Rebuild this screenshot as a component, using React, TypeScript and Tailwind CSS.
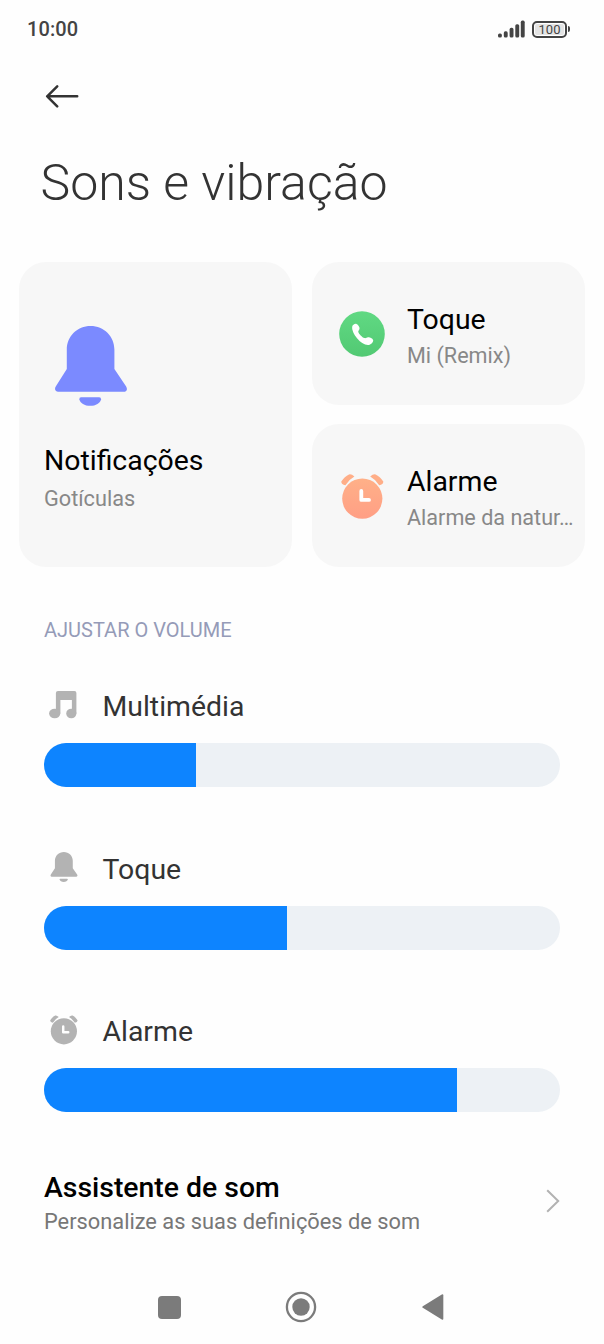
type IconProps = { className?: string };

function BellIcon({ className }: IconProps) {
  return (
    <svg viewBox="0 0 72 80" className={className} fill="currentColor">
      <path d="M35.6 0C48.9 0 59.4 10.4 59.4 23.6V43L71 60.2C72.9 63 71.8 65.8 68.6 65.8H3.2C.2 65.8-.9 63 .9 60.2L11.8 43V23.6C11.8 10.4 22.3 0 35.6 0Z" />
      <path d="M26 71.2H44.2Q46.2 71.2 46 73.2C45.3 77.2 40.8 79.8 35.2 79.8S25.1 77.2 24.4 73.2Q24.2 71.2 26 71.2Z" />
    </svg>
  );
}

function AlarmIcon({ className, fill = "currentColor" }: IconProps & { fill?: string }) {
  return (
    <svg viewBox="0 0 43 45" className={className}>
      <defs>
        <linearGradient id="alarm-fill" x1="0" y1="0" x2="0" y2="1">
          <stop offset="0" stopColor="#ffb088" />
          <stop offset="1" stopColor="#ff9f85" />
        </linearGradient>
      </defs>
      <circle cx="21.3" cy="24.6" r="20.1" fill={fill} />
      <path
        d="M.3 7.6Q3.6 2.3 8 .4Q10.4-.3 13.4 2.6Q8 5.6 4.4 11.2Q.2 10.6.3 7.6ZM42.3 7.6Q39 2.3 34.6.4Q32.2-.3 29.2 2.6Q34.6 5.6 38.2 11.2Q42.4 10.6 42.3 7.6Z"
        fill={fill === "currentColor" ? fill : "#ffae88"}
      />
      <path d="M20.3 17V25.9H28" fill="none" stroke="#fff" strokeWidth="3.8" strokeLinecap="round" strokeLinejoin="round" />
    </svg>
  );
}

function PhoneIcon() {
  return (
    <svg viewBox="0 0 46 46" className="mt-px size-[46px] shrink-0">
      <defs>
        <linearGradient id="phone-fill" x1="0" y1="0" x2="0" y2="1">
          <stop offset="0" stopColor="#60d983" />
          <stop offset="1" stopColor="#52c973" />
        </linearGradient>
      </defs>
      <circle cx="23" cy="23" r="22.8" fill="url(#phone-fill)" />
      <path
        d="M13.2 15.8C13.4 14 15.9 12.4 17.5 13C19.3 13.7 20.9 16.4 20.5 17.9C20.2 19 19 19.6 19.3 20.9C19.8 22.9 23.2 26.2 25.4 27.1C26.9 27.6 27.7 26.4 29 26.3C31 26.2 34.1 27.7 34.2 29.3C34.3 31.3 32.1 33.6 29.8 33.9C26 34.4 21.3 31.2 18 27.2C15.2 23.8 12.7 19 13.2 15.8Z"
        fill="#fff"
      />
    </svg>
  );
}

function MusicIcon({ className }: IconProps) {
  return (
    <svg viewBox="0 0 28 28" className={className} fill="currentColor">
      <path d="M9 0H25.5Q27.4 0 27.4 2V22.5H22.9V9H11.4V22.5H6.9V2Q6.9 0 9 0Z" />
      <ellipse cx="5.7" cy="22.5" rx="5.6" ry="4.8" />
      <ellipse cx="22.3" cy="22.5" rx="5.1" ry="4.8" />
    </svg>
  );
}

function StatusBar() {
  return (
    <div className="flex h-[58px] items-center justify-between pl-[27px] pr-[34px] text-[#444]">
      <span className="text-[20px] leading-6 font-medium tracking-[0.1px]">10:00</span>
      <div className="flex items-center gap-[7.5px]">
        <svg viewBox="0 0 27 18" className="h-[18px] w-[27px]" fill="currentColor">
          <rect x="0" y="13.6" width="3.9" height="4" rx="1.6" />
          <rect x="5.8" y="11.3" width="3.9" height="6.3" rx="1.6" />
          <rect x="11.6" y="7.8" width="3.9" height="9.8" rx="1.6" />
          <rect x="17.3" y="4.2" width="3.9" height="13.4" rx="1.6" />
          <rect x="22.8" y=".6" width="3.9" height="17" rx="1.6" />
        </svg>
        <div className="flex items-center gap-px">
          <div className="flex h-[17px] w-[35px] items-center justify-center rounded-[5px] border-2 border-[#444] bg-white p-px">
            <div className="flex size-full items-center justify-center rounded-[2px] bg-[#e4e4e4] text-[13px] leading-none">
              100
            </div>
          </div>
          <div className="h-[6px] w-[2px] rounded-r-xs bg-[#444]" />
        </div>
      </div>
    </div>
  );
}

function SoundCard({ icon, title, value }: { icon: React.ReactNode; title: string; value: string }) {
  return (
    <div className="flex items-center rounded-[27px] bg-[#f7f7f7] pl-[27px]">
      {icon}
      <div className="mt-[9px] ml-[22px] min-w-0 flex-1">
        <div className="text-[28.4px] leading-[36px] text-black">{title}</div>
        <div className="text-[21.6px] leading-[36px] whitespace-nowrap text-[#888]">{value}</div>
      </div>
    </div>
  );
}

function VolumeRow({ icon, label, level }: { icon: React.ReactNode; label: string; level: number }) {
  return (
    <div className="h-[162.5px]">
      <div className="flex h-[55px] items-start">
        <div className="flex h-9 w-[58.5px] items-center pl-[5px] text-[#b3b3b3]">{icon}</div>
        <span className="mt-px text-[28.4px] leading-[36px] text-[#333]">{label}</span>
      </div>
      <div className="h-[44px] overflow-hidden rounded-full bg-[#edf1f5]">
        <div className="h-full bg-[#0d84ff]" style={{ width: `${level}%` }} />
      </div>
    </div>
  );
}

function NavBar() {
  return (
    <div className="flex h-[72.5px] items-center pl-[158px] text-[#7b7b7b]">
      <div className="size-[22.5px] rounded-[4px] bg-[#7b7b7b]" />
      <svg viewBox="0 0 32 32" className="ml-[104.5px] size-8" fill="none" stroke="currentColor">
        <circle cx="16" cy="16" r="14.1" strokeWidth="2.3" />
        <circle cx="16" cy="16" r="8.7" fill="currentColor" stroke="none" />
      </svg>
      <svg viewBox="0 0 22 26" className="ml-[105px] h-[26px] w-[22px]" fill="currentColor">
        <path d="M.8 12.2L19.8.5Q21.3-.2 21.3 1.3V24.7Q21.3 26.2 19.8 25.5L.8 13.8Q-.3 13 .8 12.2Z" />
      </svg>
    </div>
  );
}

export default function App() {
  return (
    <div className="h-[1344px] w-[604px] overflow-hidden bg-[#fefefe] font-['Roboto',sans-serif]">
      <StatusBar />

      <header className="h-[204px] pt-[26px]">
        <svg viewBox="0 0 34 24" className="ml-[45px] h-6 w-[34px]" fill="none" stroke="#333" strokeWidth="2.5" strokeLinecap="round" strokeLinejoin="round">
          <path d="M32.2 12.3H2.2M12.2 2.3L2.2 12.3L12.2 22.3" />
        </svg>
        <h1 className="mt-[45px] ml-[40.5px] text-[50px] leading-[60px] font-light text-[#333]">Sons e vibração</h1>
      </header>

      <section className="grid h-[305px] grid-cols-2 grid-rows-2 gap-x-5 gap-y-[19px] px-[19px]">
        <div className="row-span-2 rounded-[27px] bg-[#f7f7f7] pt-16 pl-[25px]">
          <BellIcon className="ml-[11px] h-20 w-[72px] text-[#7b8aff]" />
          <div className="mt-[37px] text-[28.4px] leading-[36px] text-black">Notificações</div>
          <div className="mt-[2px] text-[21.7px] leading-[36px] text-[#888]">Gotículas</div>
        </div>
        <SoundCard icon={<PhoneIcon />} title="Toque" value="Mi (Remix)" />
        <SoundCard
          icon={<AlarmIcon className="mt-px mr-px ml-[2px] h-[45px] w-[43px] shrink-0" fill="url(#alarm-fill)" />}
          title="Alarme"
          value="Alarme da natur…"
        />
      </section>

      <section className="px-11 pt-[50.5px]">
        <h2 className="h-[70.5px] text-[20px] leading-6 text-[#959bb8]">AJUSTAR O VOLUME</h2>
        <VolumeRow icon={<MusicIcon className="-mt-[2px] size-7" />} label="Multimédia" level={29.5} />
        <VolumeRow icon={<BellIcon className="-mt-[4px] ml-[0.5px] h-[30px] w-7" />} label="Toque" level={47.1} />
        <VolumeRow icon={<AlarmIcon className="-mt-[3px] ml-[0.5px] h-[30px] w-7" />} label="Alarme" level={80} />
      </section>

      <section className="flex h-[95.5px] items-start justify-between px-11">
        <div className="-mt-[5px]">
          <div className="text-[28.4px] leading-[34px] font-medium text-black">Assistente de som</div>
          <div className="text-[21.8px] leading-[34px] text-[#777]">Personalize as suas definições de som</div>
        </div>
        <svg viewBox="0 0 14 24" className="mt-[13.5px] h-6 w-[14px]" fill="none" stroke="#b2b2b2" strokeWidth="2">
          <path d="M1.2 1.2L12.2 12L1.2 22.8" />
        </svg>
      </section>

      <NavBar />
    </div>
  );
}
